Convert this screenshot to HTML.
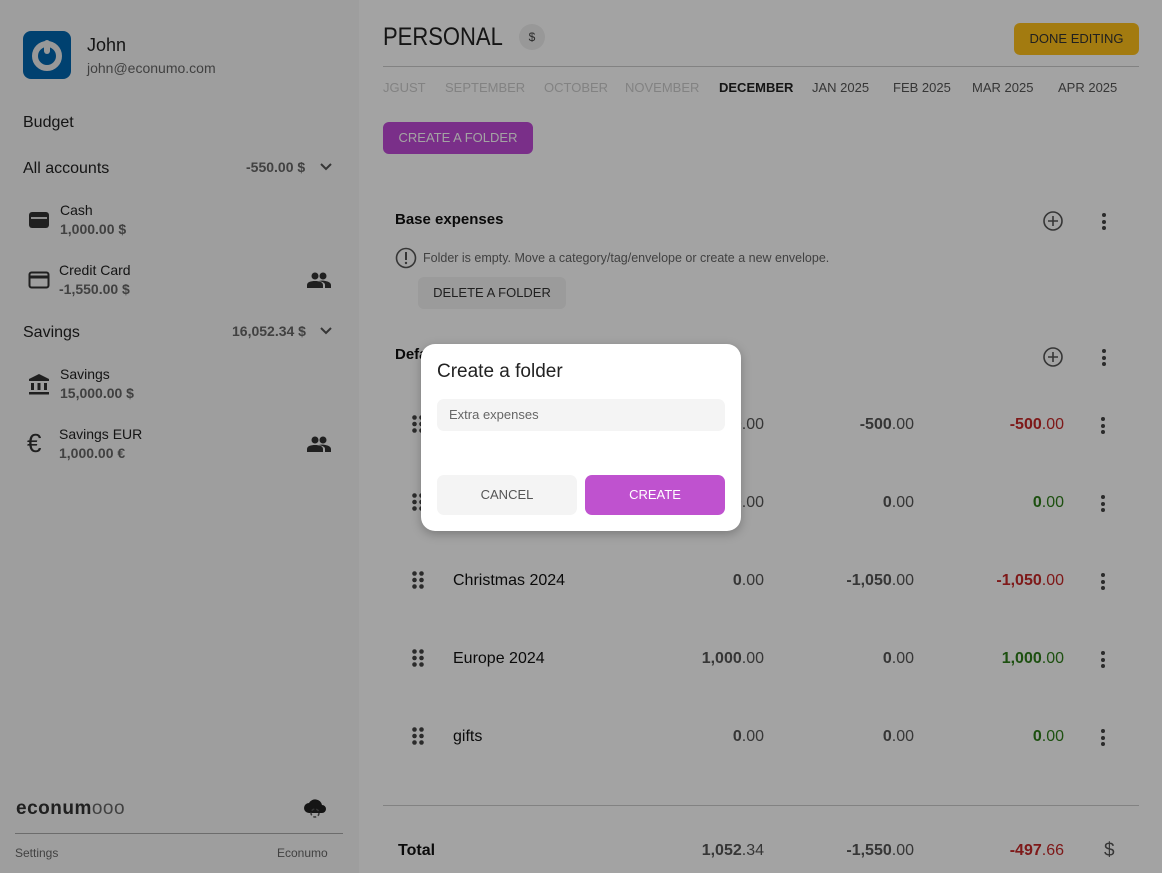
<!DOCTYPE html>
<html><head><style>
*{box-sizing:border-box;margin:0;padding:0}
body{width:1162px;height:873px;overflow:hidden;font-family:"Liberation Sans",sans-serif;background:#fff;position:relative;color:#222}
.side{position:absolute;left:0;top:0;width:359px;height:873px;background:#f7f7f7}
.abs{position:absolute}
.main{position:absolute;left:359px;top:0;right:0;height:873px;background:#fff}
.num{position:absolute;font-size:16px;color:#555;text-align:right;width:140px}
.num b{font-weight:bold}
.kebab{position:absolute;width:4px}
.kebab i{display:block;width:4px;height:4px;border-radius:2px;background:#444;margin-bottom:2.5px}
.overlay{position:absolute;inset:0;background:rgba(0,0,0,0.36)}
.amt{font-weight:bold;color:#666}
</style></head><body>
<div class="side">
  <div class="abs" style="left:23px;top:31px;width:48px;height:48px;background:#0067b0;border-radius:8px">
    <svg width="48" height="48" viewBox="0 0 48 48"><circle cx="24" cy="25" r="12" fill="none" stroke="#eee" stroke-width="6"/><rect x="21" y="9" width="6" height="14" fill="#eee" rx="3"/></svg>
  </div>
  <div class="abs" style="left:87px;top:35px;font-size:18px;color:#222">John</div>
  <div class="abs" style="left:87px;top:60px;font-size:14px;color:#666">john@econumo.com</div>
  <div class="abs" style="left:23px;top:114px;font-size:16px">Budget</div>
  <div class="abs" style="left:23px;top:160px;font-size:16px">All accounts</div>
  <div class="abs amt" style="left:246px;top:159px;font-size:14px">-550.00 $</div>
  <svg class="abs" style="left:319px;top:162px" width="14" height="10"><path d="M2 2l5 5 5-5" fill="none" stroke="#555" stroke-width="2"/></svg>
  <svg class="abs" style="left:28px;top:210px" width="22" height="20"><rect x="1" y="2" width="20" height="16" rx="3" fill="#333"/><path d="M3 8h16" stroke="#ddd" stroke-width="2"/></svg>
  <div class="abs" style="left:60px;top:202px;font-size:14px">Cash</div>
  <div class="abs amt" style="left:60px;top:221px;font-size:14px">1,000.00 $</div>
  <svg class="abs" style="left:28px;top:270px" width="22" height="20"><rect x="1.5" y="2.5" width="19" height="15" rx="2" fill="none" stroke="#333" stroke-width="2"/><path d="M2 7h18" stroke="#333" stroke-width="3"/></svg>
  <div class="abs" style="left:59px;top:262px;font-size:14px">Credit Card</div>
  <div class="abs amt" style="left:59px;top:281px;font-size:14px">-1,550.00 $</div>
  <svg class="abs" style="left:307px;top:272px" width="24" height="16"><circle cx="8" cy="4" r="3.5" fill="#333"/><circle cx="16" cy="4" r="3.5" fill="#333"/><path d="M0 16v-3c0-3 4-4 8-4s8 1 8 4v3zM12 9c3-1 12 0 12 4v3h-6v-3c0-2-2-3-6-4z" fill="#333"/></svg>
  <div class="abs" style="left:23px;top:324px;font-size:16px">Savings</div>
  <div class="abs amt" style="left:232px;top:323px;font-size:14px">16,052.34 $</div>
  <svg class="abs" style="left:319px;top:326px" width="14" height="10"><path d="M2 2l5 5 5-5" fill="none" stroke="#555" stroke-width="2"/></svg>
  <svg class="abs" style="left:28px;top:373px" width="22" height="22"><path d="M11 1L1 6v2h20V6z" fill="#333"/><rect x="3" y="10" width="3" height="7" fill="#333"/><rect x="9.5" y="10" width="3" height="7" fill="#333"/><rect x="16" y="10" width="3" height="7" fill="#333"/><rect x="1" y="19" width="20" height="2.5" fill="#333"/></svg>
  <div class="abs" style="left:60px;top:366px;font-size:14px">Savings</div>
  <div class="abs amt" style="left:60px;top:385px;font-size:14px">15,000.00 $</div>
  <div class="abs" style="left:27px;top:428px;font-size:26px;color:#333">€</div>
  <div class="abs" style="left:59px;top:426px;font-size:14px">Savings EUR</div>
  <div class="abs amt" style="left:59px;top:445px;font-size:14px">1,000.00 €</div>
  <svg class="abs" style="left:307px;top:436px" width="24" height="16"><circle cx="8" cy="4" r="3.5" fill="#333"/><circle cx="16" cy="4" r="3.5" fill="#333"/><path d="M0 16v-3c0-3 4-4 8-4s8 1 8 4v3zM12 9c3-1 12 0 12 4v3h-6v-3c0-2-2-3-6-4z" fill="#333"/></svg>
  <div class="abs" style="left:16px;top:798px;font-size:19px;font-weight:bold;color:#333;letter-spacing:0.5px">econum<span style="font-weight:normal;color:#666">ooo</span></div>
  <svg class="abs" style="left:304px;top:797px" width="22" height="22"><path d="M5 16a5 5 0 0 1 0-10 7 7 0 0 1 13 2 4 4 0 0 1 0 8z" fill="#222"/><circle cx="11" cy="16" r="4" fill="none" stroke="#555" stroke-width="1.5" stroke-dasharray="3 2"/></svg>
  <div class="abs" style="left:15px;top:833px;width:328px;height:1px;background:#aaa"></div>
  <div class="abs" style="left:15px;top:846px;font-size:12px;color:#666">Settings</div>
  <div class="abs" style="left:277px;top:846px;font-size:12px;color:#666">Econumo</div>
</div>
<div class="main">
  <div class="abs" style="left:24px;top:23px;font-size:25px;color:#222;transform:scaleX(0.88);transform-origin:left">PERSONAL</div>
  <div class="abs" style="left:160px;top:24px;width:26px;height:26px;border-radius:13px;background:#eee;font-size:12px;text-align:center;line-height:26px;color:#444">$</div>
  <div class="abs" style="left:655px;top:23px;width:125px;height:32px;border-radius:6px;background:#ffc11a;font-size:13px;text-align:center;line-height:32px;color:#333">DONE EDITING</div>
  <div class="abs" style="left:24px;top:66px;width:756px;height:1px;background:#ccc"></div>
  <div class="abs" style="left:24px;top:80px;font-size:13px;color:#ccc;white-space:nowrap">
    <span style="position:absolute;left:0">JGUST</span><span style="position:absolute;left:62px">SEPTEMBER</span><span style="position:absolute;left:161px">OCTOBER</span><span style="position:absolute;left:242px">NOVEMBER</span><span style="position:absolute;left:336px;color:#222;font-weight:bold">DECEMBER</span><span style="position:absolute;left:429px;color:#555">JAN 2025</span><span style="position:absolute;left:510px;color:#555">FEB 2025</span><span style="position:absolute;left:589px;color:#555">MAR 2025</span><span style="position:absolute;left:675px;color:#555">APR 2025</span>
  </div>
  <div class="abs" style="left:24px;top:122px;width:150px;height:32px;border-radius:6px;background:#bf4ad6;color:#fff;font-size:13px;text-align:center;line-height:32px">CREATE A FOLDER</div>
  <div class="abs" style="left:36px;top:211px;font-size:15px;font-weight:bold;color:#111">Base expenses</div>
  <svg class="abs" style="left:683px;top:210px" width="22" height="22"><circle cx="11" cy="11" r="9" fill="none" stroke="#555" stroke-width="1.6"/><path d="M11 6v10M6 11h10" stroke="#555" stroke-width="1.6"/></svg>
  <div class="kebab" style="left:743px;top:213px"><i></i><i></i><i></i></div>
  <svg class="abs" style="left:36px;top:247px" width="22" height="22"><circle cx="11" cy="11" r="9.5" fill="none" stroke="#555" stroke-width="1.6"/><path d="M11 5v8" stroke="#555" stroke-width="2"/><circle cx="11" cy="16" r="1.2" fill="#555"/></svg>
  <div class="abs" style="left:64px;top:251px;font-size:12.5px;color:#666">Folder is empty. Move a category/tag/envelope or create a new envelope.</div>
  <div class="abs" style="left:59px;top:277px;width:148px;height:32px;border-radius:6px;background:#f2f2f2;font-size:13px;text-align:center;line-height:32px;color:#333">DELETE A FOLDER</div>
  <div class="abs" style="left:36px;top:346px;font-size:15px;font-weight:bold;color:#111">Default</div>
  <svg class="abs" style="left:683px;top:346px" width="22" height="22"><circle cx="11" cy="11" r="9" fill="none" stroke="#555" stroke-width="1.6"/><path d="M11 6v10M6 11h10" stroke="#555" stroke-width="1.6"/></svg>
  <div class="kebab" style="left:743px;top:349px"><i></i><i></i><i></i></div>

  <div id="rows"></div>
  <div class="abs" style="left:24px;top:805px;width:756px;height:1px;background:#ccc"></div>
  <div class="abs" style="left:39px;top:842px;font-size:16px;font-weight:bold;color:#111">Total</div>
  <div class="num" style="left:265px;top:842px"><b>1,052</b>.34</div>
  <div class="num" style="left:415px;top:842px"><b>-1,550</b>.00</div>
  <div class="num" style="left:565px;top:842px;color:#c62828"><b>-497</b>.66</div>
  <div class="abs" style="left:745px;top:840px;font-size:19px;color:#555">$</div>
</div>
<script>
var rows=[[424,"","<b>-500</b>.00","<b>-500</b>.00","#c62828","<b>0</b>.00"],[502,"","<b>0</b>.00","<b>0</b>.00","#2e7d1a","<b>0</b>.00"],[580,"Christmas 2024","<b>-1,050</b>.00","<b>-1,050</b>.00","#c62828","<b>0</b>.00"],[658,"Europe 2024","<b>0</b>.00","<b>1,000</b>.00","#2e7d1a","<b>1,000</b>.00"],[736,"gifts","<b>0</b>.00","<b>0</b>.00","#2e7d1a","<b>0</b>.00"]];
var h="";rows.forEach(function(r){var y=r[0];
h+='<svg class="abs" style="left:53px;top:'+(y-9)+'px" width="12" height="18"><g fill="#444"><circle cx="2.5" cy="2.5" r="2.3"/><circle cx="9.5" cy="2.5" r="2.3"/><circle cx="2.5" cy="9" r="2.3"/><circle cx="9.5" cy="9" r="2.3"/><circle cx="2.5" cy="15.5" r="2.3"/><circle cx="9.5" cy="15.5" r="2.3"/></g></svg>';
h+='<div class="abs" style="left:94px;top:'+(y-8)+'px;font-size:16px;color:#111">'+r[1]+'</div>';
h+='<div class="num" style="left:265px;top:'+(y-8)+'px">'+r[5]+'</div>';
h+='<div class="num" style="left:415px;top:'+(y-8)+'px">'+r[2]+'</div>';
h+='<div class="num" style="left:565px;top:'+(y-8)+'px;color:'+r[4]+'">'+r[3]+'</div>';
h+='<div class="kebab" style="left:742px;top:'+(y-7)+'px"><i></i><i></i><i></i></div>';});
document.getElementById("rows").outerHTML=h;
</script>
<div class="overlay"></div>
<div class="abs" style="left:421px;top:344px;width:320px;height:187px;background:#fff;border-radius:14px;box-shadow:0 3px 10px rgba(0,0,0,0.25)">
  <div class="abs" style="left:16px;top:17px;font-size:19px;color:#222">Create a folder</div>
  <div class="abs" style="left:16px;top:55px;width:288px;height:32px;background:#f4f4f4;border-radius:7px;font-size:13px;color:#666;padding-left:12px;line-height:32px">Extra expenses</div>
  <div class="abs" style="left:16px;top:131px;width:140px;height:40px;background:#f4f4f4;border-radius:7px;font-size:13px;color:#555;text-align:center;line-height:40px">CANCEL</div>
  <div class="abs" style="left:164px;top:131px;width:140px;height:40px;background:#bf52cf;border-radius:7px;font-size:13px;color:#fff;text-align:center;line-height:40px">CREATE</div>
</div>
</body></html>
